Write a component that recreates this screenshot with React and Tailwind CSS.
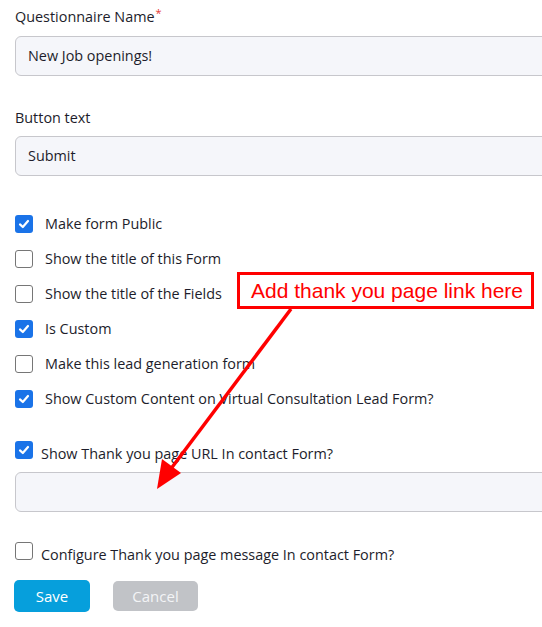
import React from 'react';

const font = { fontFamily: '"Open Sans", "Noto Sans", sans-serif' };

function Box({ checked }) {
  return checked ? (
    <span className="flex h-[18px] w-[18px] shrink-0 items-center justify-center rounded-[3px] bg-[#1a73e8]">
      <svg width="12" height="12" viewBox="0 0 12 12" fill="none">
        <path d="M2 6.4 L4.8 9 L10 3" stroke="white" strokeWidth="2.2" strokeLinecap="round" strokeLinejoin="round" />
      </svg>
    </span>
  ) : (
    <span className="h-[18px] w-[18px] shrink-0 rounded-[3px] border border-[#767676] bg-white" />
  );
}

const options = [
  ['Make form Public', true],
  ['Show the title of this Form', false],
  ['Show the title of the Fields', false],
  ['Is Custom', true],
  ['Make this lead generation form', false],
  ['Show Custom Content on Virtual Consultation Lead Form?', true],
];

export default function App() {
  return (
    <div className="relative h-[627px] w-[542px] overflow-hidden bg-white text-[14.4px] text-[#1d1d2b]" style={font}>
      <div className="px-[15px] pt-[7px]">
        <label className="block leading-[20px]">
          Questionnaire Name<sup className="ml-[1px] text-[11px] text-[#e53935]">*</sup>
        </label>
        <div className="mt-[9px] flex h-[40px] w-[560px] items-center rounded-[6px] border border-[#c7c7cc] bg-[#f5f6fa] px-[12px]">
          New Job openings!
        </div>

        <label className="mt-[32px] block leading-[20px]">Button text</label>
        <div className="mt-[8px] flex h-[40px] w-[560px] items-center rounded-[6px] border border-[#c7c7cc] bg-[#f5f6fa] px-[12px]">
          Submit
        </div>

        <div className="mt-[39px] flex flex-col gap-[17px]">
          {options.map(([text, checked]) => (
            <div key={text} className="flex h-[18px] items-center gap-[12px]">
              <Box checked={checked} />
              <span>{text}</span>
            </div>
          ))}
        </div>

        <div className="mt-[33px] flex items-start gap-[8px]">
          <Box checked />
          <span className="pt-[5px] leading-[16px]">Show Thank you page URL In contact Form?</span>
        </div>
        <div className="mt-[10px] h-[40px] w-[560px] rounded-[6px] border border-[#c7c7cc] bg-[#f5f6fa]" />

        <div className="mt-[30px] flex items-start gap-[8px]">
          <Box checked={false} />
          <span className="pt-[5px] leading-[16px]">Configure Thank you page message In contact Form?</span>
        </div>

        <div className="-ml-[1px] mt-[17px] flex gap-[23px]">
          <button className="h-[32px] w-[76px] rounded-[5px] bg-[#069fdc] text-[15px] font-medium text-white">Save</button>
          <button className="mt-[1px] h-[30px] w-[85px] rounded-[5px] bg-[#c1c3c7] text-[15px] font-medium text-[#f3f4f6]">Cancel</button>
        </div>
      </div>

      <div
        className="absolute left-[237px] top-[272px] flex h-[37px] w-[297px] items-center border-[3px] border-[#ff0000] bg-white pl-[11px] text-[21px] text-[#ff0000]"
        style={{ fontFamily: '"Liberation Sans", Arial, sans-serif' }}
      >
        Add thank you page link here
      </div>
      <svg className="pointer-events-none absolute left-0 top-0" width="542" height="627">
        <line x1="291" y1="309" x2="170" y2="470" stroke="#ff0000" strokeWidth="3.5" />
        <polygon points="157,489 162,459 181,473" fill="#ff0000" />
      </svg>
    </div>
  );
}
